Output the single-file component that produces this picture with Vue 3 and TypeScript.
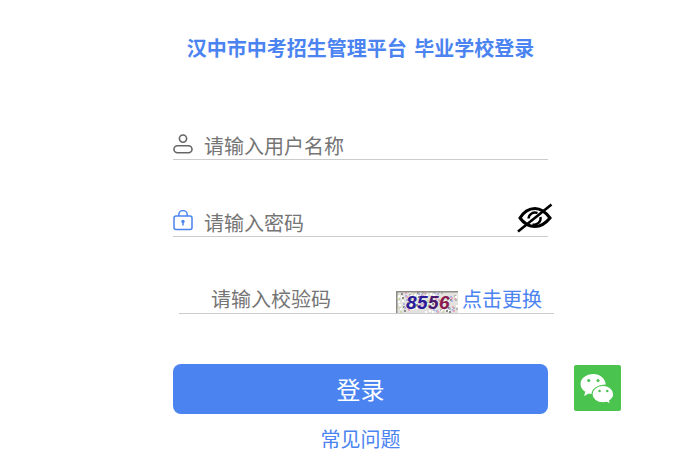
<template>
  <div class="page">
    <h1 class="title">汉中市中考招生管理平台 毕业学校登录</h1>

    <div class="field field-user">
      <svg class="field-icon" width="20" height="20" viewBox="0 0 20 20" fill="none" stroke="#666" stroke-width="1.6">
        <circle cx="10" cy="4.6" r="3.6" />
        <rect x="1" y="11.8" width="18" height="7" rx="3.5" />
      </svg>
      <input class="field-input" type="text" placeholder="请输入用户名称" />
    </div>

    <div class="field field-pwd">
      <svg class="field-icon" width="20" height="21" viewBox="0 0 20 21" fill="none" stroke="#4b84f1" stroke-width="1.5">
        <path d="M5.800 6V4.800a4.200 4.200 0 0 1 8.400 0V6" />
        <rect x="1" y="6" width="18" height="13.500" rx="2" />
        <circle cx="10" cy="11.500" r="1.700" fill="#4b84f1" stroke="none" />
        <path d="M10 12.500v3" />
      </svg>
      <input class="field-input" type="password" placeholder="请输入密码" />
      <svg class="eye" width="36" height="30" viewBox="0 0 36 30" fill="none" stroke="#000">
        <path d="M3 15C7 8.500 12 5.500 18 5.500c6 0 10.500 3.500 15 9.500-4.500 5.500-9.500 8.500-15 8.500C12 23.500 7 20.500 3 15z" stroke-width="3" />
        <path d="M11.500 15.500a6.500 6.500 0 0 1 9-5.500M23.500 14a6.500 6.500 0 0 1-8 7.500" stroke-width="2.400" />
        <path d="M1 28.500 34.500 1.500" stroke-width="2.600" />
      </svg>
    </div>

    <div class="field field-code">
      <input class="field-input code-input" type="text" placeholder="请输入校验码" />
      <svg class="captcha" width="62" height="22" viewBox="0 0 62 22">
        <rect width="62" height="22" fill="#e4e2de" />
        <rect
          v-for="(dot, i) in captchaNoise"
          :key="i"
          :x="dot.x"
          :y="dot.y"
          width="2"
          height="2"
          :fill="dot.color"
        />
        <rect width="62" height="1.500" fill="#8f8b86" />
        <rect width="1.500" height="22" fill="#8f8b86" />
        <text x="10" y="18" class="captcha-text" fill="#2a1a9a">8</text>
        <text x="21" y="18" class="captcha-text" fill="#2a1a9a">5</text>
        <text x="32" y="18" class="captcha-text" fill="#4a1a70">5</text>
        <text x="43" y="18" class="captcha-text" fill="#8a1a50">6</text>
      </svg>
      <a class="refresh">点击更换</a>
    </div>

    <div class="submit-row">
      <button class="submit" type="button">登录</button>
      <div class="wechat">
        <svg width="35" height="30" viewBox="0 0 34 30" preserveAspectRatio="none" fill="#fff">
          <path d="M13 1C6 1 .5 5.400.5 11c0 3.200 1.800 5.900 4.600 7.800L4 23l4.600-2.500c1.400.4 2.900.6 4.400.6h1C13.400 15.400 18 11.500 25 11.500 24.500 5.600 19.400 1 13 1z" />
          <path d="M22.500 12.500c-6 0-10.800 3.900-10.800 8.700s4.800 8.600 10.800 8.600c1.200 0 2.300-.1 3.400-.5l3.800 1.700-1-3.300c2.400-1.600 4-3.900 4-6.500 0-4.800-4.700-8.700-10.200-8.700z" stroke="#4ac34f" stroke-width="1" />
          <circle cx="8.500" cy="7.500" r="1.500" fill="#4ac34f" />
          <circle cx="17.500" cy="7.500" r="1.500" fill="#4ac34f" />
          <circle cx="19" cy="18" r="1.200" fill="#4ac34f" />
          <circle cx="26.500" cy="18" r="1.200" fill="#4ac34f" />
        </svg>
      </div>
    </div>

    <a class="faq">常见问题</a>
  </div>
</template>

<script setup lang="ts">
interface NoiseDot {
  x: number
  y: number
  color: string
}

// 校验码背景的杂色点，固定种子保证每次一样
const noiseColors = ['#b9b5b0', '#e6a9c4', '#a9b6e6', '#8f8b86', '#ffffff', '#c9d9a9', '#ffffff']

const captchaNoise: NoiseDot[] = Array.from({ length: 130 }, (_, i) => ({
  x: (i * 37) % 61,
  y: (i * 23 + (i % 5)) % 21,
  color: noiseColors[(i * 11) % noiseColors.length]
}))
</script>

<style>
html,
body {
  background: #fff;
}
</style>

<style scoped>
.page {
  width: 375px;
  margin-left: 173px;
  padding-top: 36px;
  font-family: "Microsoft YaHei", "Liberation Sans", "Noto Sans CJK SC", sans-serif;
}

.title {
  margin: 0;
  height: 26px;
  line-height: 26px;
  font-size: 20px;
  font-weight: 700;
  color: #4b84f1;
  text-align: center;
  white-space: nowrap;
  word-spacing: 2px;
}

.field {
  display: flex;
  align-items: center;
  height: 30px;
  border-bottom: 1px solid #ccc;
}

.field-user {
  margin-top: 67px;
}

.field-pwd {
  margin-top: 46px;
  position: relative;
}

.field-code {
  width: 375px;
  margin-top: 46px;
  margin-left: 6px;
  align-items: flex-end;
}

.field-icon {
  flex: none;
  margin-right: 12px;
}

.field-pwd .field-icon {
  margin-bottom: 2px;
}

.field-input {
  flex: 1;
  min-width: 0;
  height: 30px;
  padding: 6px 0 0;
  margin-left: -1px;
  box-sizing: border-box;
  border: 0;
  outline: 0;
  background: transparent;
  font: inherit;
  font-size: 20px;
  color: #333;
}

.field-input::placeholder {
  color: #757575;
  opacity: 1;
}

.code-input {
  padding: 4px 0 0 33px;
}

.eye {
  position: absolute;
  right: -5px;
  top: -3px;
}

.captcha {
  flex: none;
  display: block;
}

.captcha-text {
  font-family: "Liberation Sans", sans-serif;
  font-size: 19px;
  font-weight: 700;
  font-style: italic;
}

.refresh {
  flex: none;
  width: 96px;
  padding-left: 4px;
  height: 26px;
  line-height: 26px;
  box-sizing: border-box;
  font-size: 20px;
  color: #4b84f1;
  cursor: pointer;
}

.submit-row {
  display: flex;
  align-items: flex-start;
  gap: 26px;
  width: 447px;
  margin-top: 50px;
}

.submit {
  flex: none;
  width: 375px;
  height: 50px;
  padding: 0 0 2px;
  border: 0;
  border-radius: 8px;
  background: #4b84f1;
  color: #fff;
  font: inherit;
  font-size: 24px;
  cursor: pointer;
}

.wechat {
  flex: none;
  display: flex;
  align-items: center;
  justify-content: center;
  width: 47px;
  height: 46px;
  margin-top: 1px;
  border-radius: 2px;
  background: #4ac34f;
}

.faq {
  display: block;
  margin-top: 13px;
  line-height: 26px;
  font-size: 20px;
  color: #4b84f1;
  text-align: center;
  cursor: pointer;
}
</style>
